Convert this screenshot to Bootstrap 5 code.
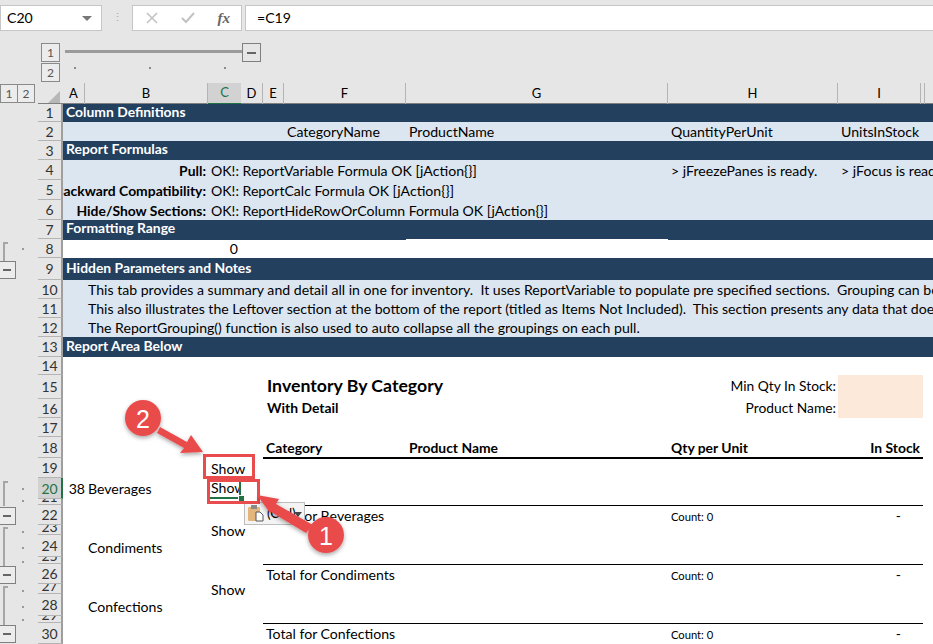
<!DOCTYPE html>
<html lang="en">
<head>
  <meta charset="UTF-8" />
  <title>Inventory By Category</title>
  <link href="https://cdn.jsdelivr.net/npm/bootstrap@5.3.3/dist/css/bootstrap.min.css" rel="stylesheet" />
  <style>
    body { background: #e6e6e6; font-family: Lato, "Liberation Sans", sans-serif; font-size: 14.1px; color: #000; overflow: hidden; }
    .app-frame { width: 933px; height: 644px; overflow: hidden; position: relative; }

    /* formula bar */
    .fbar { height: 31px; padding: 5px 0 1px; }
    .fbox { background: #fff; border: 1px solid #c6c6c6; height: 26px; }
    .name-box { width: 102px; padding: 0 6px; }
    .name-caret { border-left: 5px solid transparent; border-right: 5px solid transparent; border-top: 5px solid #777; margin-left: auto; margin-right: 3px; }
    .fbar-grip { width: 30px; color: #aaa; font-size: 11px; }
    .fn-box { width: 110px; margin-right: 3px; padding: 0 11px 0 13px; }
    .fx-mark { font-family: "Liberation Serif", serif; font-style: italic; font-weight: bold; color: #666; font-size: 15px; }
    .input-box { flex: 1; padding-left: 11px; border-right: 0; }

    /* outline strips */
    .outline-top { height: 52px; position: relative; }
    .lvl { width: 19px; height: 19px; border: 1px solid #8a8a8a; font-size: 12px; color: #555; background: #ececec; }
    .lvl-stack { margin: 12px 0 0 41px; }
    .lvl-stack .lvl + .lvl { margin-top: 1px; }
    .minus-box { width: 19px; height: 19px; border: 1px solid #7f7f7f; }
    .minus-box::after { content: ""; display: block; width: 9px; height: 2px; background: #666; }
    .top-bracket { margin: 12px 0 0 5px; }
    .top-line { width: 177px; height: 3px; background: #9b9b9b; margin-top: 7px; }
    .top-dots { position: absolute; left: 74px; top: 36px; width: 152px; }
    .dot-mark { width: 2px; height: 2px; background: #8a8a8a; }

    /* column headers */
    .head-wrap { height: 21px; }
    .left-lvls { width: 38px; padding-top: 1px; }
    .left-lvls .lvl { width: 18px; }
    .left-lvls .lvl + .lvl { margin-left: -1px; }
    .col-heads { display: grid; grid-template-columns: 25px 22px 123px 33px 22px 21px 122px 262px 170px 83px 4px 1fr; flex: 1; height: 20px; border-bottom: 1px solid #7f7f7f; box-sizing: content-box; }
    .col-h { border-right: 1px solid #b4b4b4; font-size: 13px; display: flex; align-items: center; justify-content: center; }
    .col-h.on { background: #d2d2d2; color: #217346; border-bottom: 2px solid #217346; border-right: 0; }
    .col-h.blank { border-right: 0; }
    .corner-cell { position: relative; border-right: 0; }
    .corner-cell::after { content: ""; position: absolute; right: 3px; bottom: 2px; border-left: 12px solid transparent; border-bottom: 12px solid #b7b7b7; }

    /* sheet */
    .sheet-wrap { height: 540px; }
    .rail { width: 38px; flex: none; }
    .sheet { flex: 1; display: grid; grid-template-columns: 25px 22px 123px 33px 22px 21px 122px 262px 170px 85px 1fr; grid-template-rows: 18px 19px 19px 20px 20px 20px 19px 19px 22px 19px 19px 19px 20px 18px 24px 19px 19px 21px 20px 21px 6px 20px 10px 22px 7px 20px 10px 22px 7px 21px; background: #fff; }
    .sheet > div { display: flex; align-items: center; min-width: 0; white-space: pre; }
    .rh { grid-column: 1; background: #e6e6e6; border-right: 2px solid #9e9e9e; border-bottom: 1px solid #b4b4b4; justify-content: center; font-size: 14px; color: #333; overflow: hidden; }
    .rh.tight { align-items: flex-end !important; line-height: 1; }
    .rh.on { background: #d2d2d2; color: #217346; border-right: 2px solid #217346; }
    .band { background: #dce6f1; }
    .navy { background: #24405f; color: #fff; font-weight: bold; font-size: 13.9px; padding: 0 0 2px 3px; }
    .span-all { grid-column: 2 / -1; }
    .cA { grid-column: 2; }
    .cB { grid-column: 3; padding-left: 3px; }
    .cAB { grid-column: 2 / 4; overflow: hidden; justify-content: flex-end; padding-right: 2px; font-weight: bold; font-size: 13.9px; }
    .cAE { grid-column: 2 / 7; }
    .cA2 { grid-column: 2 / 4; }
    .cC { grid-column: 4; padding-left: 3px; }
    .cCr { grid-column: 4; justify-content: flex-end; padding-right: 3px; }
    .cCG { grid-column: 4 / 9; padding-left: 3px; }
    .cCend { grid-column: 4 / -1; padding-left: 3px; }
    .cDF { grid-column: 5 / 8; }
    .cF { grid-column: 7; padding-left: 3px; }
    .cEF { grid-column: 6 / 8; padding-left: 3px; }
    .cEG { grid-column: 6 / 9; padding-left: 4px; }
    .cG { grid-column: 8; padding-left: 3px; }
    .cH { grid-column: 9; padding-left: 3px; }
    .cHend { grid-column: 9 / -1; }
    .cHr { grid-column: 9; justify-content: flex-end; padding-right: 2px; font-size: 13.8px; }
    .cI { grid-column: 10 / -1; padding-left: 3px; overflow: hidden; }
    .cIr { grid-column: 10; justify-content: flex-end; padding-right: 3px; }
    .cNote { grid-column: 2 / -1; padding-left: 25px; overflow: hidden; }
    .b { font-weight: bold; font-size: 13.9px; }
    .report-title { font-size: 17.7px; font-weight: bold; }
    .peach { background: #fde9d9; }
    .navy-lip { border-top: 1px solid #24405f; }
    .rule-thick { border-bottom: 2px solid #000; margin-bottom: -1px; }
    .rule-thin { border-top: 1px solid #000; }
    .small-count { font-size: 11.2px; padding-top: 3px; }
    .dash-cell { padding-right: 22px; }
    .lift { padding-bottom: 1px; }
    .nudge { padding-top: 2px; }
    .sel-cell { border-right: 2px solid #217346; border-bottom: 2px solid #217346; overflow: hidden; padding-left: 3px; }

    /* pasted-options popup and callouts, both lie over the sheet */
    .paste-tag { position: absolute; left: 244px; top: 502px; width: 61px; height: 23px; background: #f4f4f4; border: 1px solid #bdbdbd; font-size: 13.5px; padding-left: 22px; line-height: 21px; white-space: nowrap; }
    .paste-tag svg { position: absolute; left: 3px; top: 2px; }
    .paste-caret { position: absolute; left: 50px; top: 9px; border-left: 4px solid transparent; border-right: 4px solid transparent; border-top: 5px solid #444; }
    .callouts { position: absolute; left: 0; top: 0; pointer-events: none; }
    .fill-handle { position: absolute; left: 238px; top: 495px; width: 5px; height: 6px; background: #217346; border: 1px solid #fff; box-sizing: content-box; }
  </style>
</head>
<body>
<div class="app-frame">

  <div class="fbar d-flex">
    <div class="fbox name-box d-flex align-items-center">C20<span class="name-caret"></span></div>
    <div class="fbar-grip d-flex align-items-center justify-content-center">⋮</div>
    <div class="fbox fn-box d-flex align-items-center justify-content-between">
      <svg width="12" height="12" viewBox="0 0 12 12"><path d="M1 1 L11 11 M11 1 L1 11" stroke="#c2c2c2" stroke-width="1.6"/></svg>
      <svg width="14" height="12" viewBox="0 0 14 12"><path d="M1 6 L5 10 L13 1" fill="none" stroke="#c2c2c2" stroke-width="2"/></svg>
      <span class="fx-mark">fx</span>
    </div>
    <div class="fbox input-box d-flex align-items-center">=C19</div>
  </div>

  <div class="outline-top d-flex">
    <div class="lvl-stack">
      <div class="lvl d-flex align-items-center justify-content-center">1</div>
      <div class="lvl d-flex align-items-center justify-content-center">2</div>
    </div>
    <div class="top-bracket d-flex align-items-start">
      <div class="top-line"></div>
      <div class="minus-box d-flex align-items-center justify-content-center"></div>
    </div>
    <div class="top-dots d-flex justify-content-between">
      <span class="dot-mark"></span><span class="dot-mark"></span><span class="dot-mark"></span>
    </div>
  </div>

  <div class="head-wrap d-flex">
    <div class="left-lvls d-flex">
      <div class="lvl d-flex align-items-center justify-content-center">1</div>
      <div class="lvl d-flex align-items-center justify-content-center">2</div>
    </div>
    <div class="col-heads">
      <div class="col-h corner-cell"></div>
      <div class="col-h">A</div><div class="col-h">B</div><div class="col-h on">C</div><div class="col-h">D</div><div class="col-h">E</div>
      <div class="col-h">F</div><div class="col-h">G</div><div class="col-h">H</div><div class="col-h">I</div><div class="col-h"></div><div class="col-h blank"></div>
    </div>
  </div>

  <div class="sheet-wrap d-flex">
    <div class="rail">
      <svg width="38" height="540" viewBox="0 104 38 540">
        <g fill="none" stroke="#a6a6a6" stroke-width="2">
          <path d="M8 243 H4 V261"/><path d="M8 482 H4 V506"/><path d="M8 528 H4 V566"/><path d="M8 587 H4 V625"/>
        </g>
        <g fill="#999">
          <rect x="22" y="248" width="2" height="2"/><rect x="22" y="488" width="2" height="2"/><rect x="22" y="500" width="2" height="2"/>
          <rect x="22" y="531" width="2" height="2"/><rect x="22" y="547" width="2" height="2"/><rect x="22" y="561" width="2" height="2"/>
          <rect x="22" y="590" width="2" height="2"/><rect x="22" y="606" width="2" height="2"/><rect x="22" y="619" width="2" height="2"/>
        </g>
        <g fill="#ececec" stroke="#808080">
          <rect x="-1.5" y="261.5" width="17" height="17"/><rect x="-1.5" y="507.5" width="17" height="17"/>
          <rect x="-1.5" y="566.5" width="17" height="17"/><rect x="-1.5" y="625.5" width="17" height="17"/>
        </g>
        <g fill="#666">
          <rect x="3" y="269" width="8" height="2"/><rect x="3" y="515" width="8" height="2"/><rect x="3" y="574" width="8" height="2"/><rect x="3" y="633" width="8" height="2"/>
        </g>
      </svg>
    </div>

    <div class="sheet">
      <!-- 1 -->
      <div class="rh">1</div><div class="navy span-all">Column Definitions</div>
      <!-- 2 -->
      <div class="rh">2</div><div class="band cAE"></div><div class="band cF">CategoryName</div><div class="band cG">ProductName</div><div class="band cH">QuantityPerUnit</div><div class="band cI">UnitsInStock</div>
      <!-- 3 -->
      <div class="rh">3</div><div class="navy span-all">Report Formulas</div>
      <!-- 4 -->
      <div class="rh">4</div><div class="band cAB nudge">Pull:</div><div class="band cCG nudge">OK!: ReportVariable Formula OK [jAction{}]</div><div class="band cH nudge">&gt; jFreezePanes is ready.</div><div class="band cI nudge">&gt; jFocus is ready.</div>
      <!-- 5 -->
      <div class="rh">5</div><div class="band cAB nudge">Backward Compatibility:</div><div class="band cCend nudge">OK!: ReportCalc Formula OK [jAction{}]</div>
      <!-- 6 -->
      <div class="rh">6</div><div class="band cAB nudge">Hide/Show Sections:</div><div class="band cCend nudge">OK!: ReportHideRowOrColumn Formula OK [jAction{}]</div>
      <!-- 7 -->
      <div class="rh">7</div><div class="navy span-all">Formatting Range</div>
      <!-- 8 -->
      <div class="rh">8</div><div class="cA2 navy-lip"></div><div class="cCr navy-lip">0</div><div class="cDF navy-lip"></div><div class="cG"></div><div class="cHend navy-lip"></div>
      <!-- 9 -->
      <div class="rh">9</div><div class="navy span-all">Hidden Parameters and Notes</div>
      <!-- 10 -->
      <div class="rh">10</div><div class="band cNote">This tab provides a summary and detail all in one for inventory.  It uses ReportVariable to populate pre specified sections.  Grouping can be used to hide and show</div>
      <!-- 11 -->
      <div class="rh">11</div><div class="band cNote">This also illustrates the Leftover section at the bottom of the report (titled as Items Not Included).  This section presents any data that does not fit in a section</div>
      <!-- 12 -->
      <div class="rh">12</div><div class="band cNote">The ReportGrouping() function is also used to auto collapse all the groupings on each pull.</div>
      <!-- 13 -->
      <div class="rh">13</div><div class="navy span-all">Report Area Below</div>
      <!-- 14 -->
      <div class="rh">14</div>
      <!-- 15 -->
      <div class="rh">15</div><div class="cEG report-title lift">Inventory By Category</div><div class="cHr lift">Min Qty In Stock:</div><div class="cIr peach"></div>
      <!-- 16 -->
      <div class="rh">16</div><div class="cEG b lift">With Detail</div><div class="cHr lift">Product Name:</div><div class="cIr peach"></div>
      <!-- 17 -->
      <div class="rh">17</div>
      <!-- 18 -->
      <div class="rh">18</div><div class="cEF b rule-thick nudge">Category</div><div class="cG b rule-thick nudge">Product Name</div><div class="cH b rule-thick nudge">Qty per Unit</div><div class="cIr b rule-thick nudge">In Stock</div>
      <!-- 19 -->
      <div class="rh">19</div><div class="cC nudge">Show</div>
      <!-- 20 -->
      <div class="rh on">20</div><div class="cA justify-content-end">38</div><div class="cB">Beverages</div><div class="cC sel-cell">Show</div>
      <!-- 21 -->
      <div class="rh tight">21</div>
      <!-- 22 -->
      <div class="rh">22</div><div class="cEF rule-thin">Total for Beverages</div><div class="cG rule-thin"></div><div class="cH rule-thin small-count">Count: 0</div><div class="cIr rule-thin dash-cell">-</div>
      <!-- 23 -->
      <div class="rh tight">23</div><div class="cC nudge">Show</div>
      <!-- 24 -->
      <div class="rh">24</div><div class="cB pt-1">Condiments</div>
      <!-- 25 -->
      <div class="rh tight">25</div>
      <!-- 26 -->
      <div class="rh">26</div><div class="cEF rule-thin">Total for Condiments</div><div class="cG rule-thin"></div><div class="cH rule-thin small-count">Count: 0</div><div class="cIr rule-thin dash-cell">-</div>
      <!-- 27 -->
      <div class="rh tight">27</div><div class="cC nudge">Show</div>
      <!-- 28 -->
      <div class="rh">28</div><div class="cB pt-1">Confections</div>
      <!-- 29 -->
      <div class="rh tight">29</div>
      <!-- 30 -->
      <div class="rh">30</div><div class="cEF rule-thin">Total for Confections</div><div class="cG rule-thin"></div><div class="cH rule-thin small-count">Count: 0</div><div class="cIr rule-thin dash-cell">-</div>
    </div>
  </div>

  <div class="fill-handle"></div>

  <div class="paste-tag">(Ctrl)
    <svg width="19" height="19" viewBox="0 0 19 19">
      <rect x="0" y="2" width="12" height="14" rx="1" fill="#e3b77c"/>
      <rect x="3" y="0" width="6" height="4" fill="#8a8a8a"/>
      <path d="M8 7 H12 L15 10 V16 H8 Z" fill="#fff" stroke="#555"/>
    </svg>
  </div>

  <svg class="callouts" width="933" height="644" viewBox="0 0 933 644">
    <defs>
      <filter id="soft" x="-30%" y="-30%" width="160%" height="160%">
        <feDropShadow dx="0" dy="2" stdDeviation="2" flood-color="#000" flood-opacity=".35"/>
      </filter>
    </defs>
    <g fill="none" stroke="#e94c4c" stroke-width="3">
      <rect x="204.5" y="455.5" width="49" height="22"/>
      <rect x="208.5" y="480.5" width="50" height="22"/>
    </g>
    <g fill="#e94c4c" filter="url(#soft)">
      <polygon points="203,452 191,435 187,442 160,427 157,433 184,448 180,453"/>
      <polygon points="257,495 279,499 276,504 313,525 306,533 271,512 270,513"/>
      <circle cx="143" cy="418" r="18"/>
      <circle cx="326" cy="535" r="18"/>
    </g>
    <path d="M294 512 h8 l-4 5 z" fill="#444"/>
    <text x="143" y="428" text-anchor="middle" fill="#fff" font-family="Liberation Sans, sans-serif" font-size="25">2</text>
    <text x="326" y="545" text-anchor="middle" fill="#fff" font-family="Liberation Sans, sans-serif" font-size="25">1</text>
  </svg>
</div>
<script src="https://cdn.jsdelivr.net/npm/bootstrap@5.3.3/dist/js/bootstrap.bundle.min.js"></script>
</body>
</html>
